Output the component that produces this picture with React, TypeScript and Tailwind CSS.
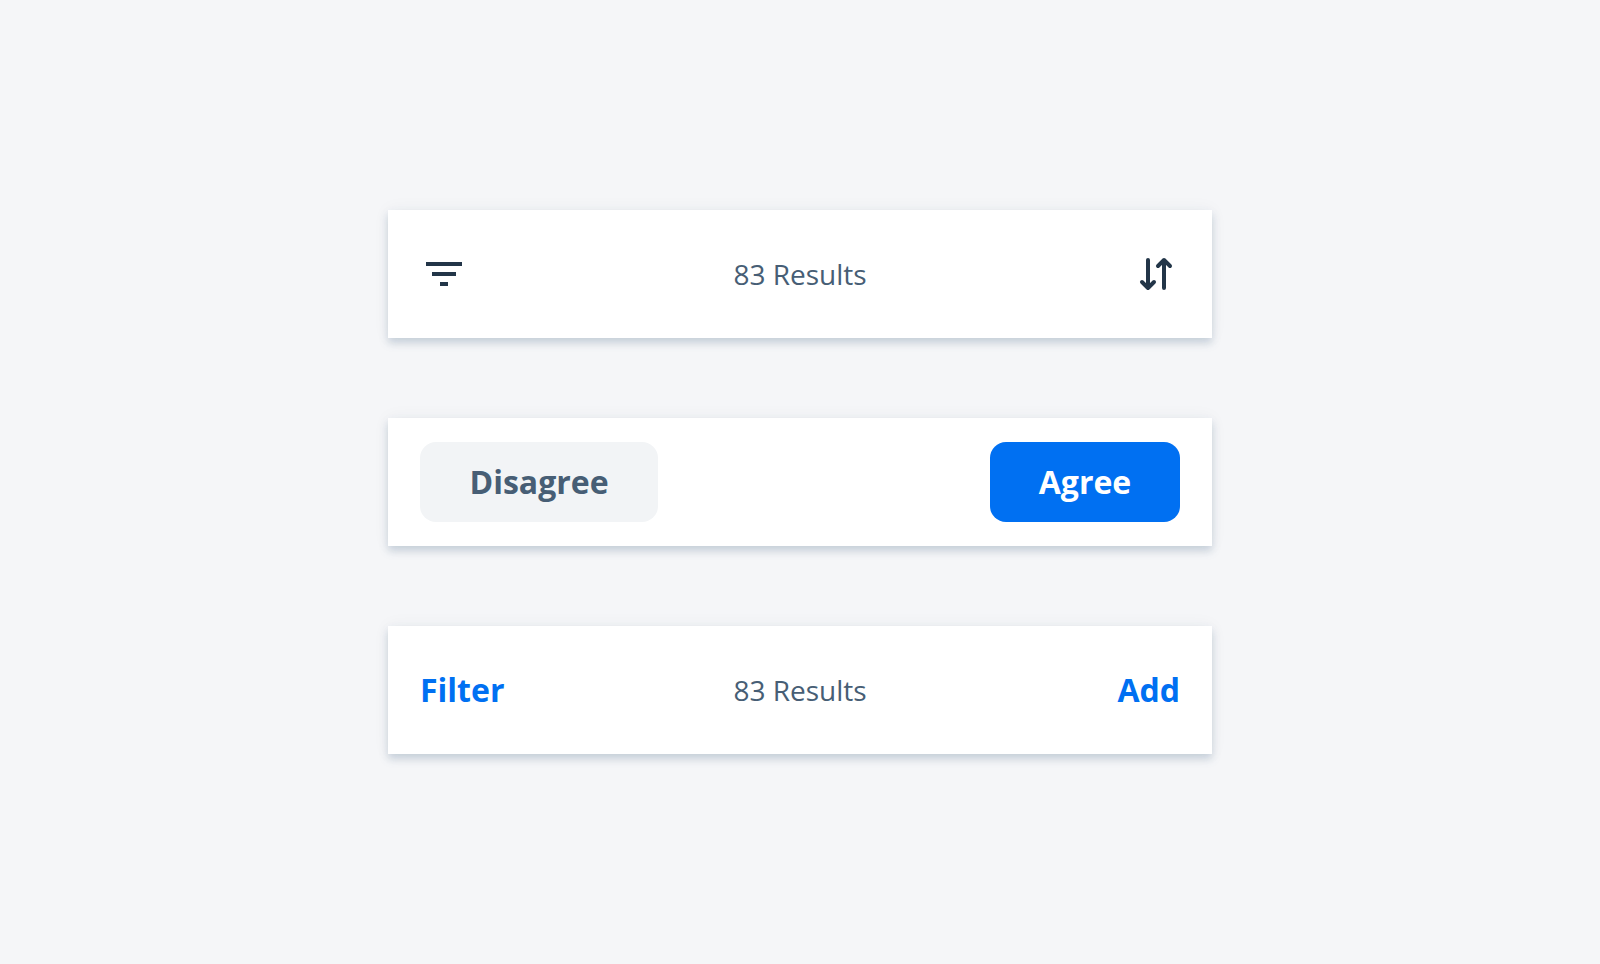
import type { ReactNode } from "react";

function Bar({ children }: { children: ReactNode }) {
  return (
    <div
      role="toolbar"
      className="grid h-32 w-full grid-cols-[1fr_auto_1fr] items-center bg-white px-8 shadow-[0_0_16px_rgba(34,53,72,0.05),0_5px_8px_rgba(85,115,145,0.26)]"
    >
      {children}
    </div>
  );
}

function Results() {
  return <p className="text-[28px] leading-10 text-[#475e75]">83 Results</p>;
}

function FilterIcon() {
  return (
    <svg viewBox="0 0 48 48" className="size-12" fill="currentColor" aria-hidden="true">
      <path d="M6 12h36v4H6zM12 22h24v4H12zM20 32h8v4h-8z" />
    </svg>
  );
}

function SortIcon() {
  return (
    <svg
      viewBox="0 0 48 48"
      className="size-12"
      fill="none"
      stroke="currentColor"
      strokeWidth="4"
      strokeLinecap="round"
      strokeLinejoin="round"
      aria-hidden="true"
    >
      <path d="M16 10v28M10 32l6 6 6-6M32 38V10M26 16l6-6 6 6" />
    </svg>
  );
}

export default function App() {
  return (
    <main className="flex min-h-screen items-center justify-center bg-[#f5f6f8] px-6 py-12 font-['Open_Sans',sans-serif]">
      <div className="flex w-full max-w-[824px] flex-col gap-20">
        <Bar>
          <button type="button" aria-label="Filter" className="justify-self-start text-[#223548]">
            <FilterIcon />
          </button>
          <Results />
          <button type="button" aria-label="Sort" className="justify-self-end text-[#223548]">
            <SortIcon />
          </button>
        </Bar>
        <Bar>
          <button
            type="button"
            className="h-20 min-w-[238px] justify-self-start rounded-2xl bg-[#f2f4f6] px-6 text-[32px] leading-10 font-bold text-[#475e75]"
          >
            Disagree
          </button>
          <span />
          <button
            type="button"
            className="h-20 min-w-[190px] justify-self-end rounded-2xl bg-[#0070f2] px-6 text-[32px] leading-10 font-bold text-white"
          >
            Agree
          </button>
        </Bar>
        <Bar>
          <button type="button" className="justify-self-start text-[32px] leading-10 font-bold text-[#0070f2]">
            Filter
          </button>
          <Results />
          <button type="button" className="justify-self-end text-[32px] leading-10 font-bold text-[#0070f2]">
            Add
          </button>
        </Bar>
      </div>
    </main>
  );
}
